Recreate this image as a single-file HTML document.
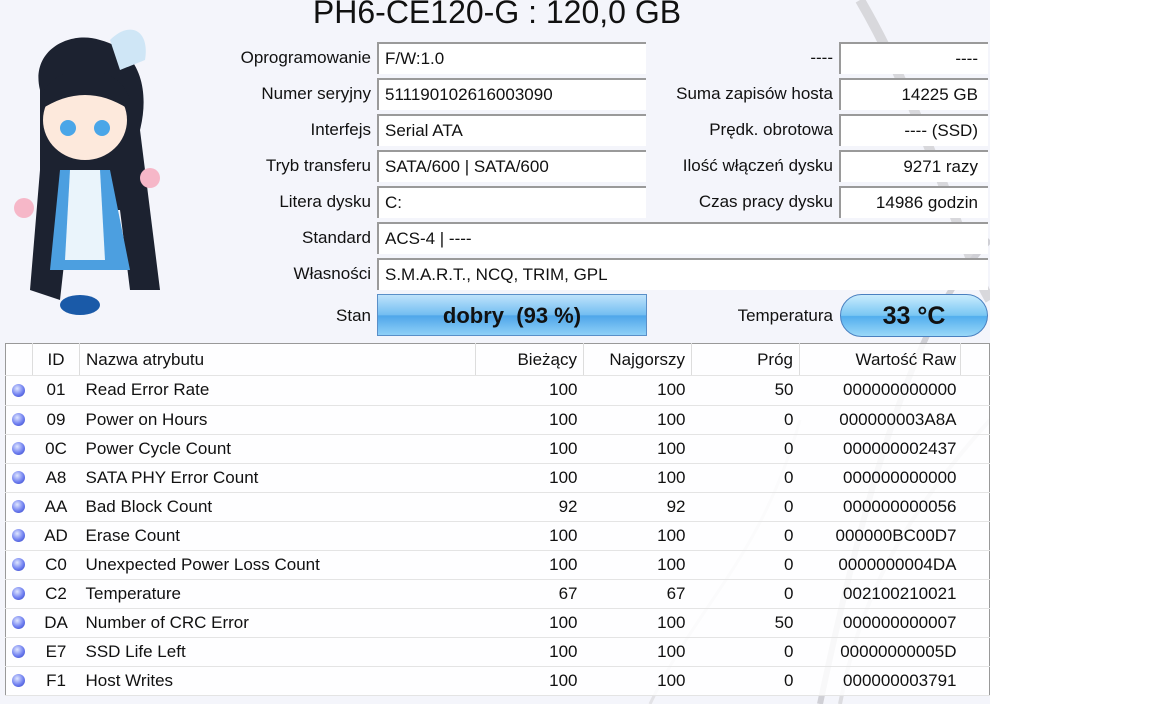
<!DOCTYPE html>
<html><head><meta charset="utf-8"><style>
*{margin:0;padding:0;box-sizing:border-box}
body{width:1152px;height:704px;background:#fff;font-family:"Liberation Sans",sans-serif;color:#111;position:relative;overflow:hidden}
#app{position:absolute;left:0;top:0;width:990px;height:704px;background:#f4f5fb;overflow:hidden}
.t{position:absolute;font-size:17px;white-space:nowrap}
.lbl{text-align:right}
.box{position:absolute;height:32px;background:#fff;border-top:2px solid #9a9a9a;border-left:2px solid #9a9a9a;font-size:17px;line-height:30px;padding:0 6px}
.r{text-align:right;padding-right:10px}
table{position:absolute;left:5px;top:343px;width:985px;border-collapse:collapse;background:rgba(255,255,255,.85);border:1px solid #999;font-size:17px}
td,th{height:29px;font-weight:normal;border-bottom:1px solid #e4e4e4;white-space:nowrap}
th{height:32px;border-right:1px solid #ddd}
.dot{width:13px;height:13px;border-radius:50%;background:radial-gradient(circle at 40% 35%,#dfe6ff,#6f7ff0 55%,#3040c0);margin-left:6px}
</style></head><body>
<div id="app">
<svg style="position:absolute;left:0;top:0" width="990" height="704">
<path d="M860 0 C930 120 960 250 990 300" stroke="#d8d8dc" stroke-width="10" fill="none"/>
<path d="M990 240 C930 300 880 420 820 704" stroke="#d0d0d6" stroke-width="6" fill="none"/>
<path d="M990 420 C900 520 860 600 840 704" stroke="#dcdce0" stroke-width="4" fill="none"/>
<path d="M650 704 C700 600 760 560 800 420" stroke="#e2e2e6" stroke-width="3" fill="none"/>
<g transform="translate(10,10)">
<path d="M30 80 C20 40 60 20 90 30 C130 40 140 80 130 120 L150 280 L120 280 L110 200 L60 200 L50 290 L20 280 L30 160 Z" fill="#1c2230"/>
<ellipse cx="75" cy="110" rx="42" ry="40" fill="#fde9dc"/>
<path d="M30 90 C40 50 110 50 120 90 L120 100 C90 80 60 80 30 100 Z" fill="#1c2230"/>
<circle cx="58" cy="118" r="8" fill="#4aa6e8"/><circle cx="92" cy="118" r="8" fill="#4aa6e8"/>
<path d="M50 160 L100 160 L120 260 L40 260 Z" fill="#4c9fe0"/>
<path d="M60 160 L90 160 L95 250 L55 250 Z" fill="#eaf4fb"/>
<path d="M100 30 C120 10 140 20 135 50 L110 60 Z" fill="#cfe6f6"/>
<ellipse cx="70" cy="295" rx="20" ry="10" fill="#1a5aa8"/>
<circle cx="140" cy="168" r="10" fill="#f6b7c8"/><circle cx="14" cy="198" r="10" fill="#f6b7c8"/>
</g>
</svg>
<div class="t" style="left:0;width:994px;text-align:center;top:-6px;font-size:32px">PH6-CE120-G : 120,0 GB</div>

<div class="t lbl" style="right:619px;top:48px">Oprogramowanie</div>
<div class="t lbl" style="right:619px;top:84px">Numer seryjny</div>
<div class="t lbl" style="right:619px;top:120px">Interfejs</div>
<div class="t lbl" style="right:619px;top:156px">Tryb transferu</div>
<div class="t lbl" style="right:619px;top:192px">Litera dysku</div>
<div class="t lbl" style="right:619px;top:228px">Standard</div>
<div class="t lbl" style="right:619px;top:264px">Własności</div>
<div class="t lbl" style="right:619px;top:306px">Stan</div>

<div class="box" style="left:377px;top:42px;width:269px">F/W:1.0</div>
<div class="box" style="left:377px;top:78px;width:269px">511190102616003090</div>
<div class="box" style="left:377px;top:114px;width:269px">Serial ATA</div>
<div class="box" style="left:377px;top:150px;width:269px">SATA/600 | SATA/600</div>
<div class="box" style="left:377px;top:186px;width:269px">C:</div>
<div class="box" style="left:377px;top:222px;width:611px">ACS-4 | ----</div>
<div class="box" style="left:377px;top:258px;width:611px">S.M.A.R.T., NCQ, TRIM, GPL</div>

<div class="t lbl" style="right:157px;top:48px">----</div>
<div class="t lbl" style="right:157px;top:84px">Suma zapisów hosta</div>
<div class="t lbl" style="right:157px;top:120px">Prędk. obrotowa</div>
<div class="t lbl" style="right:157px;top:156px">Ilość włączeń dysku</div>
<div class="t lbl" style="right:157px;top:192px">Czas pracy dysku</div>
<div class="t lbl" style="right:157px;top:306px">Temperatura</div>

<div class="box r" style="left:839px;top:42px;width:149px">----</div>
<div class="box r" style="left:839px;top:78px;width:149px">14225 GB</div>
<div class="box r" style="left:839px;top:114px;width:149px">---- (SSD)</div>
<div class="box r" style="left:839px;top:150px;width:149px">9271 razy</div>
<div class="box r" style="left:839px;top:186px;width:149px">14986 godzin</div>

<div style="position:absolute;left:377px;top:294px;width:270px;height:42px;border:1px solid #5a8fc8;background:linear-gradient(#bfe3fb,#72bdf1 50%,#4fa6ea 52%,#8fd0f7);text-align:center;font-weight:bold;font-size:22px;line-height:42px">dobry&nbsp; (93 %)</div>
<div style="position:absolute;left:840px;top:294px;width:148px;height:43px;border:1px solid #4a80c0;border-radius:22px;background:linear-gradient(#c9ecfd,#79c6f3 50%,#52aeee 52%,#9ad8f8);text-align:center;font-weight:bold;font-size:25px;line-height:43px">33 °C</div>

<table>
<tr><th style="width:27px"></th><th style="width:47px">ID</th><th style="width:396px;text-align:left;padding-left:6px">Nazwa atrybutu</th><th style="width:108px;text-align:right;padding-right:6px">Bieżący</th><th style="width:108px;text-align:right;padding-right:6px">Najgorszy</th><th style="width:108px;text-align:right;padding-right:6px">Próg</th><th style="width:161px;text-align:right;padding-right:4px">Wartość Raw</th><th style="border-right:none"></th></tr>
</table>
<table style="top:376px;border-top:none">
<colgroup><col style="width:27px"><col style="width:47px"><col style="width:396px"><col style="width:108px"><col style="width:108px"><col style="width:108px"><col style="width:161px"><col></colgroup>
<tbody id="b"></tbody>
</table>
</div>
<script>
var d=[["01","Read Error Rate",100,100,50,"000000000000"],["09","Power on Hours",100,100,0,"000000003A8A"],["0C","Power Cycle Count",100,100,0,"000000002437"],["A8","SATA PHY Error Count",100,100,0,"000000000000"],["AA","Bad Block Count",92,92,0,"000000000056"],["AD","Erase Count",100,100,0,"000000BC00D7"],["C0","Unexpected Power Loss Count",100,100,0,"0000000004DA"],["C2","Temperature",67,67,0,"002100210021"],["DA","Number of CRC Error",100,100,50,"000000000007"],["E7","SSD Life Left",100,100,0,"00000000005D"],["F1","Host Writes",100,100,0,"000000003791"]];
var h="";d.forEach(function(r){h+='<tr><td><div class="dot"></div></td><td style="text-align:center">'+r[0]+'</td><td style="padding-left:6px">'+r[1]+'</td><td style="text-align:right;padding-right:6px">'+r[2]+'</td><td style="text-align:right;padding-right:6px">'+r[3]+'</td><td style="text-align:right;padding-right:6px">'+r[4]+'</td><td style="text-align:right;padding-right:4px">'+r[5]+'</td><td></td></tr>'});
document.getElementById("b").innerHTML=h;
</script>
</body></html>
